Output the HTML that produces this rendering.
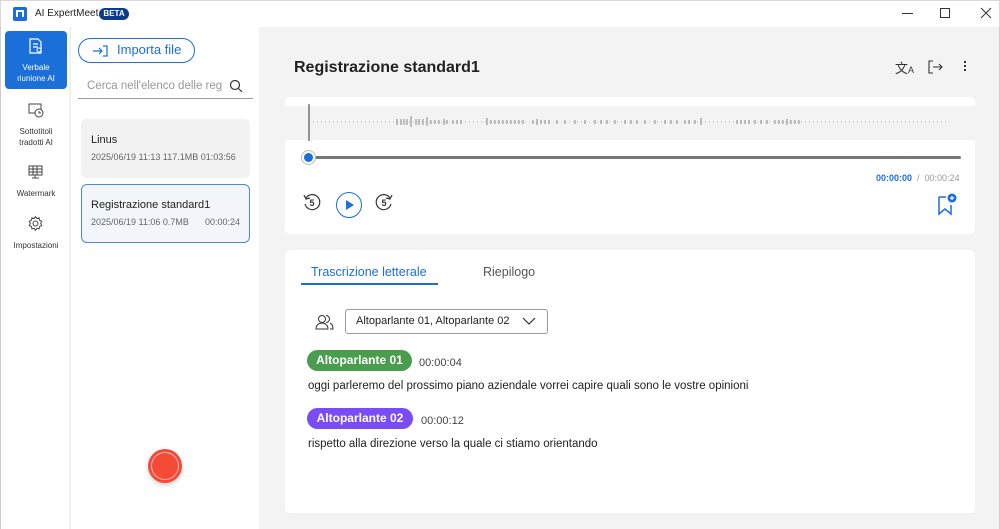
<!DOCTYPE html>
<html><head><meta charset="utf-8"><style>
*{margin:0;padding:0;box-sizing:border-box}
body{width:1000px;height:529px;overflow:hidden;font-family:"Liberation Sans",sans-serif;background:#fff;position:relative;color:#222}
.abs{position:absolute}
.title{left:0;top:0;width:1000px;height:27px;background:#fff;border:1px solid #d8d8d8;border-bottom:none}
.nav{left:0;top:27px;width:71px;height:502px;background:#fff;border-left:1px solid #ccc;border-right:2px solid #efefef}
.list{left:72px;top:27px;width:187px;height:502px;background:#fff}
.main{left:259px;top:27px;width:741px;height:502px;background:#f3f3f3;border-right:1px solid #d0d0d0}
.navitem{position:absolute;left:4px;width:62px;text-align:center;font-size:8px;color:#333;line-height:11px}
.card{background:#fff;border-radius:5px}
</style></head><body>
<div class="abs title">
  <div class="abs" style="left:12px;top:6px;width:14px;height:14px;background:#1a6fd8;border-radius:2px"></div>
  <div class="abs" style="left:15px;top:9px;width:8px;height:7px;border:2px solid #fff;border-bottom:none;border-radius:1px"></div>
  <div class="abs" style="left:34px;top:7px;font-size:10px;color:#222">AI ExpertMeet</div>
  <div class="abs" style="left:98px;top:7px;width:30px;height:12px;background:#0d3a8a;border-radius:7px;color:#fff;font-size:8px;font-weight:bold;text-align:center;line-height:12px">BETA</div>
  <div class="abs" style="left:901px;top:12px;width:11px;height:1px;background:#333"></div>
  <div class="abs" style="left:939px;top:7px;width:10px;height:10px;border:1px solid #333"></div>
  <svg class="abs" style="left:979px;top:6px" width="12" height="12"><path d="M1 1L11 11M11 1L1 11" stroke="#333" stroke-width="1"/></svg>
</div>
<div class="abs nav">
  <div class="abs" style="left:4px;top:4px;width:62px;height:58px;background:#1a6fd8;border-radius:4px"></div>
  <svg class="abs" style="left:27px;top:11px" width="16" height="17"><path d="M2 1h8l3 3v11H2z M5 6h5M5 9h5" fill="none" stroke="#fff" stroke-width="1.2"/><circle cx="11" cy="12" r="2" fill="none" stroke="#fff"/></svg>
  <div class="navitem" style="top:35px;color:#fff">Verbale<br>riunione AI</div>
  <svg class="abs" style="left:27px;top:75px" width="16" height="16"><rect x="1" y="2" width="12" height="9" fill="none" stroke="#444"/><circle cx="11" cy="11" r="4" fill="#fff" stroke="#444"/><path d="M11 9v2h2" stroke="#444" fill="none"/></svg>
  <div class="navitem" style="top:99px">Sottotitoli<br>tradotti AI</div>
  <svg class="abs" style="left:27px;top:138px" width="16" height="14"><rect x="1" y="1" width="13" height="9" fill="none" stroke="#444"/><path d="M1 4h13M1 7h13M5 1v9M9 1v9M7 10v3M4 13h7" stroke="#444"/></svg>
  <div class="navitem" style="top:161px">Watermark</div>
  <svg class="abs" style="left:26px;top:188px" width="17" height="17"><circle cx="8.5" cy="8.5" r="2.5" fill="none" stroke="#444"/><path d="M8.5 1.5l1.3 2 2.3-.6.4 2.3 2.2 1-1 2.2 1 2.2-2.2 1-.4 2.3-2.3-.6-1.3 2-1.3-2-2.3.6-.4-2.3-2.2-1 1-2.2-1-2.2 2.2-1 .4-2.3 2.3.6z" fill="none" stroke="#444"/></svg>
  <div class="navitem" style="top:213px">Impostazioni</div>
</div>
<div class="abs list">
  <div class="abs" style="left:6px;top:11px;width:117px;height:25px;border:1.5px solid #1a6fd8;border-radius:13px;color:#1a6fd8;font-size:13px;line-height:22px;padding-left:38px">Importa file</div>
  <svg class="abs" style="left:20px;top:18px" width="16" height="12"><path d="M1 6h9M7 3l3 3-3 3M11 1h4v10h-4" fill="none" stroke="#1a6fd8" stroke-width="1.2"/></svg>
  <div class="abs" style="left:15px;top:53px;font-size:11.5px;color:#999">Cerca nell'elenco delle reg</div>
  <svg class="abs" style="left:157px;top:52px" width="14" height="14"><circle cx="6" cy="6" r="4.5" fill="none" stroke="#333" stroke-width="1.2"/><path d="M9.5 9.5L13 13" stroke="#333" stroke-width="1.2"/></svg>
  <div class="abs" style="left:6px;top:71px;width:175px;height:1px;background:#999"></div>
  <div class="abs" style="left:9px;top:92px;width:169px;height:59px;background:#f2f2f2;border-radius:6px"></div>
  <div class="abs" style="left:19px;top:107px;font-size:11px">Linus</div>
  <div class="abs" style="left:19px;top:125px;font-size:9px;color:#666">2025/06/19 11:13 117.1MB 01:03:56</div>
  <div class="abs" style="left:9px;top:157px;width:169px;height:59px;background:#f2f5fa;border:1px solid #4a8ad8;border-radius:6px"></div>
  <div class="abs" style="left:19px;top:172px;font-size:11px">Registrazione standard1</div>
  <div class="abs" style="left:19px;top:190px;font-size:9px;color:#666">2025/06/19 11:06 0.7MB</div>
  <div class="abs" style="left:133px;top:190px;font-size:9px;color:#666">00:00:24</div>
  <div class="abs" style="left:76px;top:422px;width:34px;height:34px;border-radius:50%;background:#f44a36;box-shadow:0 2px 5px rgba(0,0,0,.2)"></div>
  <div class="abs" style="left:79px;top:425px;width:28px;height:28px;border-radius:50%;border:1px solid #fbb"></div>
</div>
<div class="abs main">
  <div class="abs" style="left:35px;top:32px;font-size:16px;font-weight:bold;color:#222">Registrazione standard1</div>
  <div class="abs" style="left:636px;top:31px;font-size:13px;color:#333">文<span style="font-size:9px">A</span></div>
  <svg class="abs" style="left:669px;top:33px" width="15" height="14"><path d="M5 1H1v12h4M5 7h9M11 4l3 3-3 3" fill="none" stroke="#333" stroke-width="1.1"/></svg>
  <div class="abs" style="left:705px;top:34px;width:2px;height:2px;background:#333;box-shadow:0 4px #333,0 8px #333"></div>
  <div class="abs card" style="left:26px;top:70px;width:690px;height:137px">
    <div class="abs" style="left:0;top:9px;width:690px;height:34px;background:#f3f3f3"></div>
    <svg class="abs" style="left:0;top:4px" width="690" height="50">
      <line x1="24" y1="3" x2="24" y2="40" stroke="#333" stroke-width="1"/>
      <line x1="28" y1="21" x2="664" y2="21" stroke="#bbb" stroke-width="1" stroke-dasharray="1 3"/>
      <g stroke="#888" stroke-width="1" transform="translate(0,-8)">
        <path d="M112 26v6M116 26v6M119 26v6M122 26v6M126 23v11M131 26v6M134 26v6M138 26v6M142 24v9M146 27v4M150 27v4M154 27v4M159 26v6M162 27v4M168 27v4M172 27v4M176 27v4M202 25v7M206 27v4M210 27v4M214 27v4M218 27v4M222 27v4M226 27v4M230 27v4M234 27v4M238 27v4M248 27v4M252 26v6M256 27v4M260 27v4M264 27v4M272 27v4M280 27v4M290 27v4M300 27v4M310 27v4M316 27v4M322 27v4M330 27v4M340 27v4M346 27v4M352 27v4M360 27v4M370 27v4M380 27v4M386 27v4M392 27v4M400 27v4M404 27v4M410 27v4M416 25v7M452 27v4M456 27v4M460 27v4M464 27v4M470 27v4M476 27v4M482 27v4M490 27v4M494 27v4M498 27v4M502 26v6M506 27v4M510 27v4M514 27v4"/>
      </g>
    </svg>
    <div class="abs" style="left:25px;top:59px;width:651px;height:3px;background:#777;border-radius:2px"></div>
    <div class="abs" style="left:16px;top:53px;width:15px;height:15px;border-radius:50%;background:#fff;border:1px solid #bbb"></div>
    <div class="abs" style="left:19px;top:56px;width:9px;height:9px;border-radius:50%;background:#1a6fd8"></div>
    <div class="abs" style="left:591px;top:76px;font-size:9px;color:#999"><span style="color:#1a6fd8;font-weight:bold">00:00:00</span> &nbsp;/&nbsp; 00:00:24</div>
    <svg class="abs" style="left:17px;top:95px" width="20" height="20"><path d="M4 6A7.5 7.5 0 1 1 3 12" fill="none" stroke="#333" stroke-width="1.2"/><path d="M2 3l2 4 4-1" fill="none" stroke="#333" stroke-width="1.2"/><text x="10" y="14" font-size="9" font-weight="bold" text-anchor="middle" font-family="Liberation Sans" fill="#333">5</text></svg>
    <div class="abs" style="left:51px;top:95px;width:26px;height:26px;border-radius:50%;border:1.5px solid #1a6fd8"></div>
    <svg class="abs" style="left:60px;top:103px" width="10" height="10"><path d="M1 0L9 5L1 10z" fill="#1a6fd8"/></svg>
    <svg class="abs" style="left:89px;top:95px" width="20" height="20"><path d="M16 6A7.5 7.5 0 1 0 17 12" fill="none" stroke="#333" stroke-width="1.2"/><path d="M18 3l-2 4-4-1" fill="none" stroke="#333" stroke-width="1.2"/><text x="10" y="14" font-size="9" font-weight="bold" text-anchor="middle" font-family="Liberation Sans" fill="#333">5</text></svg>
    <svg class="abs" style="left:651px;top:95px" width="22" height="24"><path d="M3 5h7M3 5v17l6-5 6 5v-9" fill="none" stroke="#1a6fd8" stroke-width="1.5"/><circle cx="16" cy="6" r="4.5" fill="#1a6fd8"/><path d="M16 4v4M14 6h4" stroke="#fff" stroke-width="1.2"/></svg>
  </div>
  <div class="abs card" style="left:26px;top:223px;width:690px;height:263px">
    <div class="abs" style="left:26px;top:15px;font-size:12.5px;color:#1a6fd8">Trascrizione letterale</div>
    <div class="abs" style="left:16px;top:33px;width:137px;height:2px;background:#1a6fd8"></div>
    <div class="abs" style="left:198px;top:15px;font-size:12.5px;color:#555">Riepilogo</div>
    <svg class="abs" style="left:30px;top:63px" width="20" height="18"><circle cx="7" cy="6" r="3.5" fill="none" stroke="#333"/><path d="M1 16c0-4 3-6 6-6s6 2 6 6z" fill="none" stroke="#333"/><path d="M11 2.5a3.5 3.5 0 0 1 0 7M15 10c2 1 3 3 3 6h-3" fill="none" stroke="#333"/></svg>
    <div class="abs" style="left:60px;top:59px;width:203px;height:25px;border:1px solid #999;border-radius:3px;font-size:11px;line-height:23px;padding-left:10px;color:#222">Altoparlante 01, Altoparlante 02</div>
    <svg class="abs" style="left:237px;top:67px" width="14" height="9"><path d="M1 1l6 6 6-6" fill="none" stroke="#333" stroke-width="1.2"/></svg>
    <div class="abs" style="left:22px;top:100px;width:105px;height:21px;background:#4a9d4f;border-radius:11px;color:#fff;font-size:12px;font-weight:bold;text-align:center;line-height:21px">Altoparlante 01</div>
    <div class="abs" style="left:134px;top:107px;font-size:11px;color:#444">00:00:04</div>
    <div class="abs" style="left:23px;top:130px;font-size:11.5px;color:#222">oggi parleremo del prossimo piano aziendale vorrei capire quali sono le vostre opinioni</div>
    <div class="abs" style="left:22px;top:158px;width:106px;height:21px;background:#7a4cf5;border-radius:11px;color:#fff;font-size:12px;font-weight:bold;text-align:center;line-height:21px">Altoparlante 02</div>
    <div class="abs" style="left:136px;top:165px;font-size:11px;color:#444">00:00:12</div>
    <div class="abs" style="left:23px;top:188px;font-size:11.5px;color:#222">rispetto alla direzione verso la quale ci stiamo orientando</div>
  </div>
</div>
</body></html>
